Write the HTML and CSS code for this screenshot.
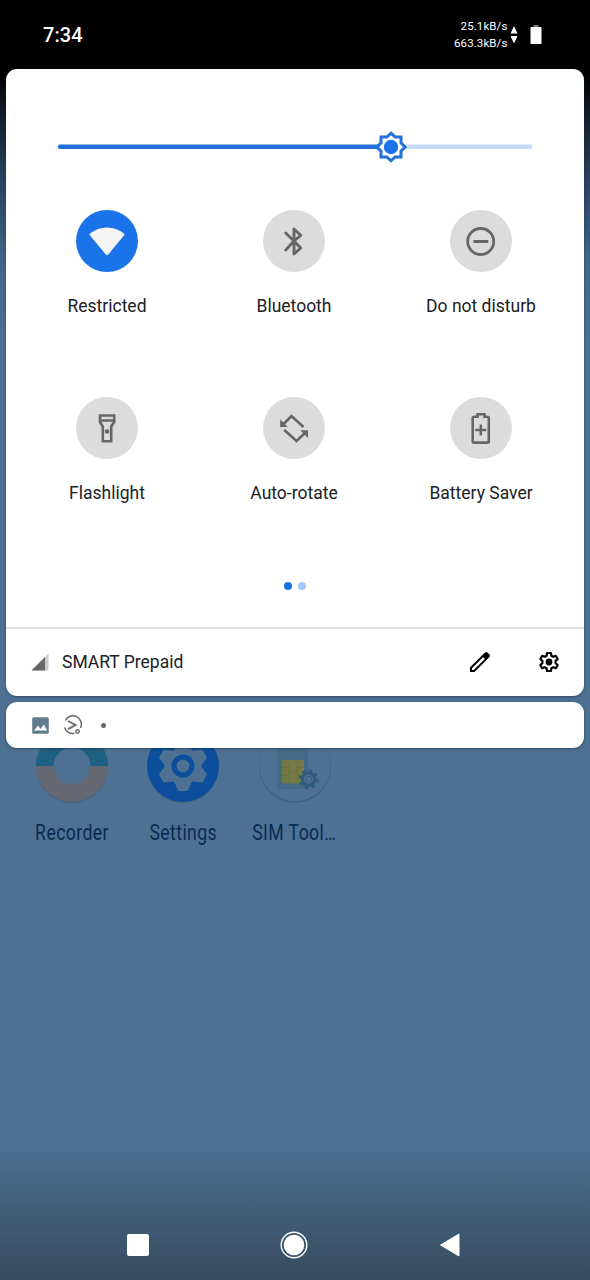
FILE: index.html
```html
<!DOCTYPE html>
<html lang="en">
<head>
<meta charset="utf-8">
<title>Quick settings</title>
<link rel="stylesheet" href="styles.css">
</head>
<body>
<div class="phone">
  <header class="status">
    <span class="clock">7:34</span>
    <div class="speeds"><span>25.1kB/s</span><span>663.3kB/s</span></div>
    <svg class="arrows" width="8" height="18" viewBox="0 0 8 18"><path d="M4 0 7.500 7.500H.5zM.5 10h7L4 17.500z" fill="#fff"/></svg>
    <svg class="battery" width="12" height="20" viewBox="0 0 12 20"><path d="M3.500 0h5v2h-5z" fill="#777"/><path d="M.5 2h11v17H.5z" fill="#fff"/></svg>
  </header>

  <main class="panel">
    <svg class="slider" width="484" height="40" viewBox="0 0 484 40">
      <path d="M338 19.700H477" stroke="#c6daf7" stroke-width="4.500" stroke-linecap="round"/>
      <path d="M7 19.700H330" stroke="#2271dc" stroke-width="4.500" stroke-linecap="round"/>
      <path d="M338 6.200 342.200 10H348V15.800L352 20 348 24.200V30H342.200L338 33.800 333.800 30H328V24.200L324 20 328 15.800V10H333.800Z" fill="#fff" stroke="#2271dc" stroke-width="3"/>
      <circle cx="338" cy="20" r="7.200" fill="#1a73e8"/>
    </svg>

    <div class="tiles">
      <div class="tile">
        <div class="disc on"><svg width="62" height="62" viewBox="0 0 62 62"><path d="M31 17.500C37.500 17.500 43 19.500 48 23.500Q49 24.300 48.200 25.300L32.200 44.600Q31 46 29.800 44.600L13.800 25.300Q13 24.300 14 23.500C19 19.500 24.500 17.500 31 17.500Z" fill="#f4f4f4"/></svg></div>
        <span>Restricted</span>
      </div>
      <div class="tile">
        <div class="disc"><svg width="62" height="62" viewBox="0 0 62 62"><path d="M22.700 23 31 31 37.700 25.300 31 19V44L37.700 38 31 31 22.700 40" fill="none" stroke="#666" stroke-width="2.900" stroke-linecap="round" stroke-linejoin="round"/></svg></div>
        <span>Bluetooth</span>
      </div>
      <div class="tile">
        <div class="disc"><svg width="62" height="62" viewBox="0 0 62 62"><circle cx="30.700" cy="31.500" r="13" fill="none" stroke="#666" stroke-width="2.800"/><path d="M23.300 31.500h15" stroke="#666" stroke-width="3"/></svg></div>
        <span>Do not disturb</span>
      </div>
      <div class="tile">
        <div class="disc"><svg width="62" height="62" viewBox="0 0 62 62"><path d="M24 18.500H38.200V25L35.200 29.500V44.200H26.800V29.500L24 25ZM24 23.500H38" fill="none" stroke="#666" stroke-width="2.600"/><circle cx="31" cy="34.500" r="2.200" fill="#666"/></svg></div>
        <span>Flashlight</span>
      </div>
      <div class="tile">
        <div class="disc"><svg width="62" height="62" viewBox="0 0 62 62"><path d="M40.500 30 28.500 19 19.500 28M21.300 33 33.500 44 42.500 35.500" fill="none" stroke="#666" stroke-width="2.600"/><path d="M17.200 22.500V30H24.700ZM45 33.200H37.300L45 41Z" fill="#666"/></svg></div>
        <span>Auto-rotate</span>
      </div>
      <div class="tile">
        <div class="disc"><svg width="62" height="62" viewBox="0 0 62 62"><path d="M27.500 17.300H34.500V19.800H37.500Q38.800 19.800 38.800 21.200V44.200Q38.800 45.600 37.500 45.600H24Q22.700 45.600 22.700 44.200V21.200Q22.700 19.800 24 19.800H27.500Z" fill="none" stroke="#666" stroke-width="2.600"/><path d="M30.800 27.500v11M25.300 33h11" stroke="#666" stroke-width="2.500"/></svg></div>
        <span>Battery Saver</span>
      </div>
    </div>

    <div class="pages"><i class="dot current"></i><i class="dot"></i></div>

    <footer class="footer">
      <svg width="18" height="18" viewBox="0 0 18 18"><path d="M17.500.5V17.500H.5Z" fill="#ccc"/><path d="M14 4V17.500H.5Z" fill="#666"/></svg>
      <span class="carrier">SMART Prepaid</span>
      <svg class="edit" width="22" height="22" viewBox="0 0 22 22"><path fill-rule="evenodd" d="M1 21V16.300L16 1.500Q17.200.5 18.400 1.500L20.500 3.600Q21.500 4.800 20.500 6L5.500 21ZM3 17.200V19H4.700L15.800 8 14 6.200Z" fill="#000"/></svg>
      <svg class="gear" width="22" height="22" viewBox="0 0 22 22"><path d="M9.100 2H12.900L13.400 4.700 15.200 5.700 17.800 4.800 19.700 8 17.600 9.800V12.200L19.700 14 17.800 17.200 15.200 16.300 13.400 17.300 12.900 20H9.100L8.600 17.300 6.800 16.300 4.200 17.200 2.300 14 4.400 12.200V9.800L2.300 8 4.200 4.800 6.800 5.700 8.600 4.700Z" fill="none" stroke="#000" stroke-width="2.200" stroke-linejoin="round"/><circle cx="11" cy="11" r="3.400" fill="#000"/></svg>
    </footer>
  </main>

  <section class="notices">
    <svg width="17" height="17" viewBox="0 0 17 17"><rect x=".2" y=".2" width="16.600" height="16.600" rx="1.500" fill="#607d8b"/><path d="M2 13.500 6 8.500 8.500 12 11.800 7.500 15.200 13.500Z" fill="#fff"/></svg>
    <svg class="capture" width="20" height="20" viewBox="0 0 20 20"><g fill="none" stroke="#6a6a6a" stroke-width="1.500"><path d="M2.200 5.500A8.300 8.300 0 0 1 17.500 13M1.600 12.500A8.300 8.300 0 0 0 11.500 18.300"/><path d="M5 6 12.500 10 5 14.200" stroke-width="1.900"/><circle cx="14.500" cy="16.500" r="1.700"/></g></svg>
    <i class="more"></i>
  </section>

  <section class="apps">
    <div class="app">
      <svg width="74" height="74" viewBox="0 0 74 74"><circle cx="37" cy="38" r="36" fill="#416486"/><path d="M1 37a36 36 0 0 1 72 0z" fill="#1e607f"/><path d="M1 37a36 36 0 0 0 72 0z" fill="#656870"/><circle cx="37" cy="37" r="18.500" fill="#4e7193"/></svg>
      <span>Recorder</span>
    </div>
    <div class="app">
      <svg width="74" height="74" viewBox="0 0 74 74"><circle cx="37" cy="38" r="36" fill="#416486"/><circle cx="37" cy="37" r="36" fill="#0b4f9c"/><g fill="#4e7193"><circle cx="37" cy="37" r="18.500"/><path d="M28 22 32 12.500Q32.300 12 33 12H41Q41.700 12 42 12.500L46 22Z"/><path d="M28 22 32 12.500Q32.300 12 33 12H41Q41.700 12 42 12.500L46 22Z" transform="rotate(60 37 37)"/><path d="M28 22 32 12.500Q32.300 12 33 12H41Q41.700 12 42 12.500L46 22Z" transform="rotate(120 37 37)"/><path d="M28 22 32 12.500Q32.300 12 33 12H41Q41.700 12 42 12.500L46 22Z" transform="rotate(180 37 37)"/><path d="M28 22 32 12.500Q32.300 12 33 12H41Q41.700 12 42 12.500L46 22Z" transform="rotate(240 37 37)"/><path d="M28 22 32 12.500Q32.300 12 33 12H41Q41.700 12 42 12.500L46 22Z" transform="rotate(300 37 37)"/></g><circle cx="37" cy="37" r="9" fill="none" stroke="#0b4f9c" stroke-width="5"/></svg>
      <span>Settings</span>
    </div>
    <div class="app">
      <svg width="74" height="74" viewBox="0 0 74 74"><circle cx="37" cy="37.800" r="36" fill="#3c6186"/><circle cx="37" cy="36.800" r="35.500" fill="#4e7193"/><path d="M19 10H44L50 18V60H19Z" fill="#446b86"/><path d="M24 31H46V54.500H24Z" fill="#747945"/><path d="M24 38.500H31M39 38.500H46M24 46.500H31M39 46.500H46M31 34V54M39 34V54M31 42.500H39" stroke="#69733f" stroke-width="1"/><circle cx="50.500" cy="50" r="8.600" fill="none" stroke="#305b7e" stroke-width="2.500" stroke-dasharray="3.600 3.150"/><circle cx="50.500" cy="50" r="6.200" fill="#4e7193" stroke="#305b7e" stroke-width="3"/><circle cx="50.500" cy="50" r="3" fill="none" stroke="#305b7e" stroke-width="1"/></svg>
      <span>SIM Tool…</span>
    </div>
  </section>

  <nav class="nav">
    <svg width="22" height="22" viewBox="0 0 22 22"><rect width="22" height="22" rx="2" fill="#fff"/></svg>
    <svg width="28" height="28" viewBox="0 0 28 28"><circle cx="14" cy="14" r="12.800" fill="none" stroke="#fff" stroke-width="1.400"/><circle cx="14" cy="14" r="10.300" fill="#fff"/></svg>
    <svg width="22" height="24" viewBox="0 0 22 24"><path d="M1.500 12 20 1V23Z" fill="#fff" stroke="#fff" stroke-width="1" stroke-linejoin="round"/></svg>
  </nav>
</div>
</body>
</html>
```
FILE: styles.css
```css
* { box-sizing: border-box; }
body { margin: 0; font-family: Roboto, "Noto Sans", sans-serif; color: #202124; }
svg { display: block; flex: none; }
.phone {
  width: 590px; height: 1280px; overflow: hidden;
  display: flex; flex-direction: column;
  background: linear-gradient(#000 0, #000 75px, #0d1722 105px, #27405a 175px, #43678b 265px, #4d7093 340px, #4e7193 1142px, #426079 1205px, #364b62 1280px);
}
.status { height: 69px; flex: none; display: flex; align-items: center; padding: 0 48px 0 43px; color: #fff; }
.clock { font-size: 20px; font-weight: 500; letter-spacing: .1px; flex: 1; }
.speeds { display: flex; flex-direction: column; align-items: flex-end; font-size: 11.500px; line-height: 16.500px; letter-spacing: .1px; }
.arrows { margin-left: 2px; }
.battery { margin-left: 12.500px; margin-top: 1px; }

.panel {
  height: 627px; flex: none; margin: 0 6px; border-radius: 11px; background: #fff;
  display: flex; flex-direction: column; z-index: 1;
  box-shadow: 0 1px 3px rgba(20, 40, 60, .5);
}
.slider { margin: 58px 0 0 47px; }
.tiles { display: grid; grid-template-columns: repeat(3, 187px); grid-template-rows: 187px 170px; margin: 43px 0 0 7.500px; }
.tile { display: flex; flex-direction: column; align-items: center; font-size: 17.500px; line-height: 24px; gap: 22px; }
.disc { width: 62px; height: 62px; border-radius: 50%; background: #dcdcdc; }
.disc.on { background: #1a73e8; }
.pages { display: flex; justify-content: center; gap: 6px; margin-top: 14.500px; }
.dot { width: 8px; height: 8px; border-radius: 50%; background: #a3c7f6; }
.dot.current { background: #1a73e8; }
.footer { margin-top: auto; height: 69px; border-top: 2px solid #dfe0e2; display: flex; align-items: center; padding: 0 24px 1px 25px; }
.carrier { flex: 1; margin-left: 13px; font-size: 17.500px; }
.edit { margin-right: 47px; margin-top: -1px; }
.gear { margin-top: -1px; }

.notices {
  height: 46px; flex: none; margin: 6px 6px 0; padding: 0 26px; border-radius: 11px; background: #fff;
  display: flex; align-items: center; z-index: 1; box-shadow: 0 1px 3px rgba(20, 40, 60, .5);
}
.capture { margin-left: 14px; }
.more { width: 5px; height: 5px; border-radius: 50%; background: #666; margin-left: 18px; }

.apps { display: grid; grid-template-columns: repeat(3, 111.500px); margin: -19px 0 0 16px; }
.app { display: flex; flex-direction: column; align-items: center; gap: 17px; color: #0a2b50; font-size: 21.500px; line-height: 26px; }
.app span { white-space: nowrap; letter-spacing: .5px; transform: scaleX(.82); }

.nav { margin-top: auto; height: 70px; display: flex; justify-content: space-between; align-items: center; padding: 0 129px 0 127px; }
```
